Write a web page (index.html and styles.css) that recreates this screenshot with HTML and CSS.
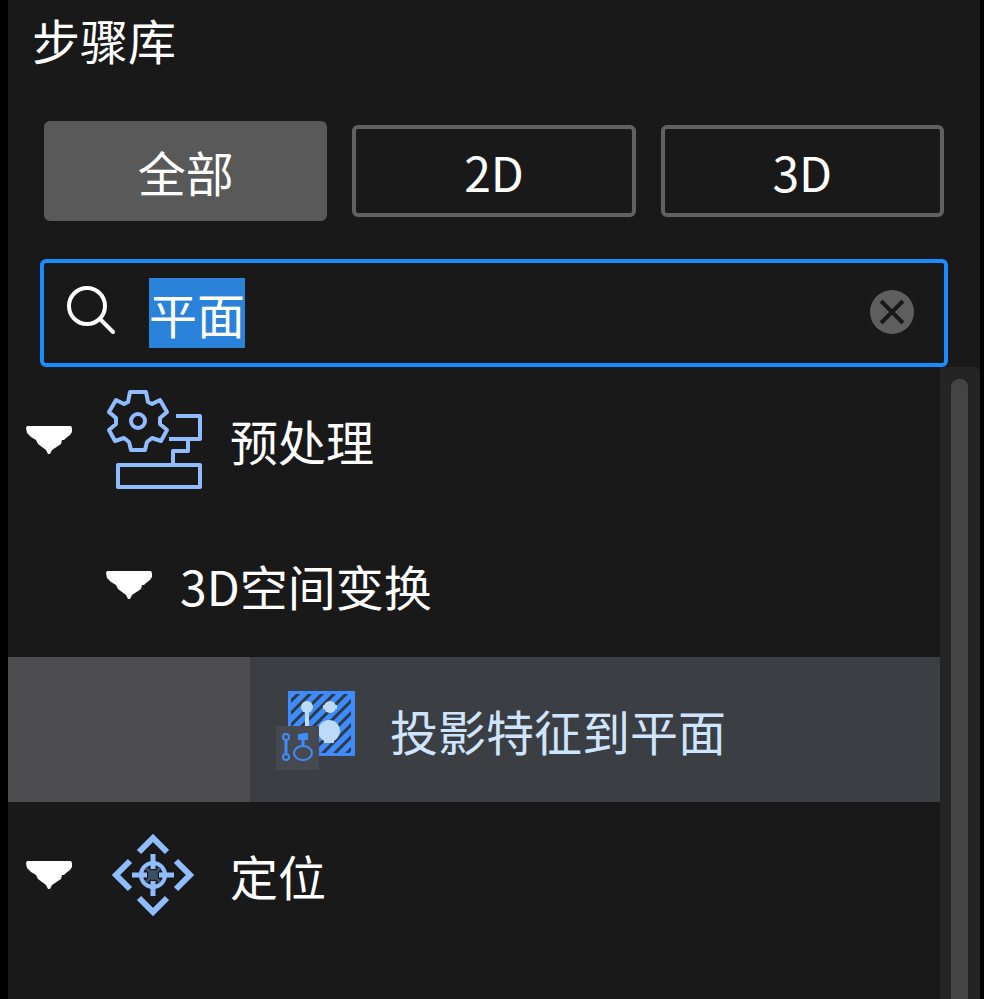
FILE: index.html
```html
<!DOCTYPE html>
<html lang="zh-CN">
<head>
    <meta charset="utf-8">
    <title>步骤库</title>
    <meta name="viewport" content="width=device-width, initial-scale=1">
    <link rel="stylesheet" href="styles.css">
</head>
<body>
    <div class="panel">
        <h1 class="title">步骤库</h1>
        <div class="filters">
            <button type="button" class="filter active">全部</button>
            <button type="button" class="filter">2D</button>
            <button type="button" class="filter">3D</button>
        </div>
        <div class="search">
            <label for="keyword" class="search-icon" aria-label="搜索">
                <svg width="50" height="54" viewBox="0 0 50 54" fill="none" stroke="#fff" stroke-width="4" stroke-linecap="round">
                    <circle cx="21" cy="20" r="18"/>
                    <path d="M34 33L47 46"/>
                </svg>
            </label>
            <input type="text" id="keyword" class="keyword" value="平面" autocomplete="off" spellcheck="false">
            <button type="button" class="clear" aria-label="清除">
                <svg width="44" height="46" viewBox="0 0 44 46">
                    <circle cx="22" cy="22" r="22" fill="#5e5e5e"/>
                    <path d="M11 11L33 33M33 11L11 33" stroke="#191919" stroke-width="4"/>
                </svg>
            </button>
        </div>
        <div class="content">
            <div class="tree">
                <div class="row">
                    <button type="button" class="caret" aria-label="折叠">
                        <svg width="46" height="30" viewBox="0 0 46 30"><path d="M1 1H45L46 3V7L44 10L40 13L38 15H36L35 19L29 23L26 25L24 29H22L20 25L16 22L12 19L10 15L5 12L1 8L0 3Z" fill="#fff"/></svg>
                    </button>
                    <svg class="icon" width="96" height="100" viewBox="0 0 96 100" fill="none" stroke="#8fbdff" stroke-width="4" stroke-linejoin="round">
                        <path d="M24 2H40L42 12L46 14L54 10L61 22L54 28V34L61 40L55 51L46 48L41 52L39 60H25L23 52L18 48L9 51L3 40L10 34V28L3 22L10 10L18 14L22 12Z"/>
                        <circle cx="32" cy="31" r="7"/>
                        <path d="M70 26H94V49H63M82 49V61H67V75M12 75H94V97H12Z"/>
                    </svg>
                    <span class="name">预处理</span>
                </div>
                <div class="row level2">
                    <button type="button" class="caret" aria-label="折叠">
                        <svg width="46" height="30" viewBox="0 0 46 30"><path d="M1 1H45L46 3V7L44 10L40 13L38 15H36L35 19L29 23L26 25L24 29H22L20 25L16 22L12 19L10 15L5 12L1 8L0 3Z" fill="#fff"/></svg>
                    </button>
                    <span class="name">3D空间变换</span>
                </div>
                <div class="row selected">
                    <span class="indent"></span>
                    <svg class="step-icon" width="80" height="80" viewBox="0 0 80 80">
                        <rect x="12" y="1" width="67" height="65" fill="#3d8bfd"/>
                        <clipPath id="hatch"><rect x="15" y="4" width="60" height="59"/></clipPath>
                        <path clip-path="url(#hatch)" stroke="#303841" stroke-width="3" d="M12 14L26 0M12 26L38 0M12 38L50 0M12 50L62 0M12 62L74 0M12 74L86 0M24 74L86 12M36 74L86 24M48 74L86 36M60 74L86 48"/>
                        <g fill="#bddbf8">
                            <circle cx="31" cy="17" r="6"/>
                            <path d="M29 18H33V36H29Z"/>
                            <circle cx="54" cy="17" r="6"/>
                            <path d="M47 15H61V19H47Z"/>
                            <circle cx="53" cy="41" r="11"/>
                            <path d="M48 49H58V53H48Z"/>
                        </g>
                        <rect y="36" width="43" height="44" fill="#464a50"/>
                        <g fill="none" stroke="#3d8bfd" stroke-width="2">
                            <circle cx="10" cy="47" r="3"/>
                            <circle cx="10" cy="67" r="3"/>
                            <path d="M10 50V64" stroke-width="3"/>
                            <ellipse cx="27" cy="63" rx="9" ry="7"/>
                            <path d="M27 50V56" stroke-width="3"/>
                        </g>
                        <path fill="#3d8bfd" d="M22 44H25L27 43H32V50H29L27 52L25 50H22Z"/>
                    </svg>
                    <span class="name">投影特征到平面</span>
                </div>
                <div class="row">
                    <button type="button" class="caret" aria-label="折叠">
                        <svg width="46" height="30" viewBox="0 0 46 30"><path d="M1 1H45L46 3V7L44 10L40 13L38 15H36L35 19L29 23L26 25L24 29H22L20 25L16 22L12 19L10 15L5 12L1 8L0 3Z" fill="#fff"/></svg>
                    </button>
                    <svg class="icon" width="96" height="96" viewBox="0 0 96 96" fill="none" stroke="#8fbdff" stroke-width="6">
                        <path d="M33 25L47 11L61 25M33 71L47 85L61 71M24 34L10 48L24 62M70 34L84 48L70 62"/>
                        <circle cx="47" cy="48" r="12" fill="#191919" stroke-width="4"/>
                        <path d="M40 41L54 55M54 41L40 55" stroke="#3f4f66" stroke-width="3"/>
                        <circle cx="47" cy="48" r="5" fill="#3f4f66" stroke="none"/>
                        <path d="M47 27V42M47 54V69M26 48H41M53 48H68" stroke-width="5"/>
                    </svg>
                    <span class="name">定位</span>
                </div>
            </div>
            <div class="scrollbar"><div class="thumb"></div></div>
        </div>
    </div>
    <script>
        // start with the keyword selected, ready to be typed over
        var keyword = document.getElementById("keyword");
        keyword.focus();
        keyword.select();
    </script>
</body>
</html>
```

FILE: styles.css
```css
*{
    box-sizing: border-box;
    margin: 0;
    padding: 0;
}
body{
    background: #000;
    color: #fff;
    font-family: "Noto Sans CJK SC", sans-serif;
    font-size: 48px;
    line-height: 70px;
}
button, input{
    font: inherit;
    color: inherit;
    background: none;
    border: none;
    outline: none;
}
button{
    cursor: pointer;
}
svg{
    display: block;
}
.panel{
    display: flex;
    flex-direction: column;
    height: 100vh;
    margin: 0 4px 0 8px;
    background: #191919;
    overflow: hidden;
}
.title{
    padding: 4px 24px 0;
    font-size: 48px;
    font-weight: normal;
}
.filters{
    display: flex;
    align-items: center;
    gap: 25px;
    padding: 0 36px;
    margin-top: 47px;
}
.filter{
    flex: 1 1 0;
    height: 92px;
    border: 4px solid #616161;
    border-radius: 6px;
    line-height: 82px;
}
.filter.active{
    height: 100px;
    border-color: #595959;
    background: #595959;
    line-height: 88px;
}
.search{
    display: flex;
    align-items: center;
    height: 108px;
    margin: 38px 32px 0;
    padding: 0 30px 0 22px;
    border: 4px solid #1a8cff;
    border-radius: 6px;
}
.keyword{
    flex: 1;
    min-width: 0;
    margin: 0 24px 0 33px;
}
.keyword::selection{
    background: #2a82da;
    color: #fff;
}
.content{
    display: flex;
    flex: 1;
    min-height: 0;
}
.tree{
    flex: 1;
}
.row{
    display: flex;
    align-items: center;
    height: 145px;
    padding-left: 18px;
}
.level2{
    padding-left: 98px;
}
.icon{
    margin-left: 34px;
}
.name{
    margin-left: 28px;
}
.selected{
    padding-left: 0;
    background: #3b3e42;
    color: #cfe5ff;
}
.indent{
    align-self: stretch;
    width: 242px;
    background: #4c4c51;
}
.step-icon{
    margin-left: 26px;
}
.selected .name{
    margin-left: 34px;
}
.scrollbar{
    display: flex;
    width: 40px;
    padding: 12px 12px 0 11px;
    background: #242424;
    border-radius: 0 6px 0 0;
}
.thumb{
    flex: 1;
    background: #444;
    border-radius: 8px 8px 0 0;
}
```
